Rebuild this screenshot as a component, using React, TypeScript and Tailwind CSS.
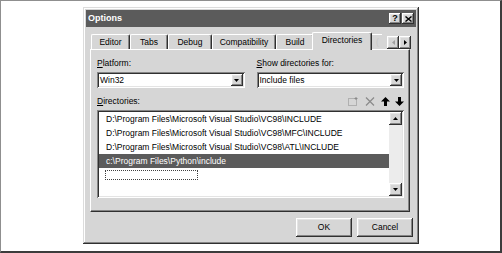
import React from "react";

const raised =
  "shadow-[inset_-1px_-1px_#303030,inset_1px_1px_#ffffff,inset_-2px_-2px_#858585,inset_2px_2px_#e4e4e4]";
const sunken =
  "shadow-[inset_1px_1px_#858585,inset_-1px_-1px_#ffffff,inset_2px_2px_#303030,inset_-2px_-2px_#e4e4e4]";

function Combo({ value }: { value: string }) {
  return (
    <div className={`h-[16px] bg-white ${sunken} flex items-center pl-[3px] pr-[2px]`}>
      <span className="flex-1 text-[8.5px] leading-none text-black">{value}</span>
      <div className={`w-[12px] h-[12px] bg-[#d6d6d6] ${raised} flex items-center justify-center`}>
        <svg width="5" height="3" viewBox="0 0 5 3">
          <path d="M0 0h5L2.5 3z" fill="#000" />
        </svg>
      </div>
    </div>
  );
}

function Tab({ label, w }: { label: string; w: string }) {
  return (
    <div
      className={`${w} h-[15px] shrink-0 border-t border-l border-white border-r border-r-[#303030] rounded-tl-[2px] rounded-tr-[2px] shadow-[inset_-1px_0_#858585] flex items-center justify-center text-[8.5px] leading-none text-black`}
    >
      {label}
    </div>
  );
}

function Row({ text }: { text: string }) {
  return (
    <div className="h-[14px] flex items-center pl-[7px] text-[8.5px] leading-none text-black whitespace-nowrap">
      {text}
    </div>
  );
}

export default function App() {
  return (
    <div className="w-[502px] h-[253px] bg-white border-t border-l border-[#8f8f8f] border-r-2 border-b-2 border-r-[#3c3c3c] border-b-[#3c3c3c] pl-[82px] pt-[6px] font-['Liberation_Sans',Arial,sans-serif]">
      <div
        className={`w-[336px] h-[237px] bg-[#d6d6d6] p-[3px] shadow-[inset_-1px_-1px_#303030,inset_1px_1px_#dcdcdc,inset_-2px_-2px_#858585,inset_2px_2px_#ffffff] flex flex-col`}
      >
        {/* Title bar */}
        <div className="h-[17px] bg-[#5b5b5b] flex items-center justify-between pl-[2px] pr-[2px] shrink-0">
          <span className="text-white font-bold text-[9px] leading-none">Options</span>
          <div className="flex gap-[1px]">
            <div className={`w-[12px] h-[11px] bg-[#d6d6d6] ${raised} flex items-center justify-center text-[9px] font-bold leading-none text-black`}>
              ?
            </div>
            <div className={`w-[12px] h-[11px] bg-[#d6d6d6] ${raised} flex items-center justify-center`}>
              <svg width="7" height="6" viewBox="0 0 7 6">
                <path d="M0.5 0.5L6.5 5.5M6.5 0.5L0.5 5.5" stroke="#000" strokeWidth="1.4" />
              </svg>
            </div>
          </div>
        </div>

        {/* Tabs */}
        <div className="mt-[5px] ml-[4px] mr-[5px] h-[17px] flex items-end relative z-10 shrink-0">
          <div className="w-[1px] shrink-0" />
          <Tab label="Editor" w="w-[39px]" />
          <Tab label="Tabs" w="w-[38px]" />
          <Tab label="Debug" w="w-[44px]" />
          <Tab label="Compatibility" w="w-[64px]" />
          <Tab label="Build" w="w-[38px]" />
          <div className="w-[60px] h-[18px] -mx-[2px] -mb-[1px] shrink-0 bg-[#d6d6d6] border-t border-l border-white border-r border-r-[#303030] rounded-tl-[2px] rounded-tr-[2px] shadow-[inset_-1px_0_#858585] flex items-center justify-center pb-[2px] text-[8.5px] leading-none text-black relative z-20">
            Directories
          </div>
          <div className="w-[12px] h-[15px] shrink-0 border-t border-l border-white overflow-hidden pl-[5px] pt-[3px] text-[8.5px] leading-none text-[#c8c8c8]">
            (
          </div>
          <div className="flex-1" />
          <div className="flex">
            <div className={`w-[12px] h-[13px] bg-[#d6d6d6] ${raised} flex items-center justify-center`}>
              <svg width="3" height="5" viewBox="0 0 3 5">
                <path d="M3 0v5L0 2.5z" fill="#a0a0a0" />
              </svg>
            </div>
            <div className={`w-[12px] h-[13px] bg-[#d6d6d6] ${raised} flex items-center justify-center`}>
              <svg width="3" height="5" viewBox="0 0 3 5">
                <path d="M0 0v5L3 2.5z" fill="#000" />
              </svg>
            </div>
          </div>
        </div>

        {/* Panel */}
        <div className="ml-[4px] w-[320px] h-[163px] shrink-0 border-t border-l border-white border-r border-b border-r-[#303030] border-b-[#303030] shadow-[inset_-1px_-1px_#858585] pl-[6px] pr-[5px] pt-[8px]">
          <div className="grid grid-cols-2 gap-x-[12px]">
            <div className="flex flex-col">
              <div className="h-[11px] text-[8.5px] leading-[11px] text-black">
                <span className="underline">P</span>latform:
              </div>
              <div className="mt-[3px]">
                <Combo value="Win32" />
              </div>
            </div>
            <div className="flex flex-col">
              <div className="h-[11px] text-[8.5px] leading-[11px] text-black">
                <span className="underline">S</span>how directories for:
              </div>
              <div className="mt-[3px]">
                <Combo value="Include files" />
              </div>
            </div>
          </div>

          <div className="mt-[8px] h-[11px] flex items-center">
            <div className="flex-1 text-[8.5px] leading-[11px] text-black">
              <span className="underline">D</span>irectories:
            </div>
            <div className="flex items-center pr-[0px]">
              <svg width="10" height="9" viewBox="0 0 10 9">
                <rect x="0.5" y="1.5" width="8" height="7" fill="none" stroke="#8a8a8a" strokeDasharray="1 1" />
                <path d="M8 0v3M6.5 1.5h3" stroke="#8a8a8a" strokeWidth="1" />
              </svg>
              <svg className="ml-[7px]" width="10" height="9" viewBox="0 0 10 9">
                <path d="M1 0.5L9 8.5M9 0.5L1 8.5" stroke="#8a8a8a" strokeWidth="1.2" />
              </svg>
              <svg className="ml-[6px]" width="9" height="9" viewBox="0 0 9 9">
                <path d="M4.5 0L9 4.5H6V9H3V4.5H0z" fill="#000" />
              </svg>
              <svg className="ml-[5px]" width="9" height="9" viewBox="0 0 9 9">
                <path d="M4.5 9L9 4.5H6V0H3V4.5H0z" fill="#000" />
              </svg>
            </div>
          </div>

          <div className={`mt-[3px] h-[88px] bg-white ${sunken} p-[2px] flex`}>
            <div className="flex-1 flex flex-col overflow-hidden">
              <Row text="D:\Program Files\Microsoft Visual Studio\VC98\INCLUDE" />
              <Row text="D:\Program Files\Microsoft Visual Studio\VC98\MFC\INCLUDE" />
              <Row text="D:\Program Files\Microsoft Visual Studio\VC98\ATL\INCLUDE" />
              <div className="h-[14px] flex items-center pl-[7px] bg-[#5b5b5b] text-[8.5px] leading-none text-white whitespace-nowrap">
                c:\Program Files\Python\include
              </div>
              <div className="h-[14px] flex items-center pl-[6px]">
                <div className="w-[93px] h-[10px] border border-dotted border-[#404040]" />
              </div>
            </div>
            <div className="w-[13px] flex flex-col bg-[#ececec]">
              <div className={`h-[13px] bg-[#d6d6d6] ${raised} flex items-center justify-center`}>
                <svg width="5" height="3" viewBox="0 0 5 3">
                  <path d="M0 3h5L2.5 0z" fill="#000" />
                </svg>
              </div>
              <div className="flex-1" />
              <div className={`h-[13px] bg-[#d6d6d6] ${raised} flex items-center justify-center`}>
                <svg width="5" height="3" viewBox="0 0 5 3">
                  <path d="M0 0h5L2.5 3z" fill="#000" />
                </svg>
              </div>
            </div>
          </div>
        </div>

        {/* Buttons */}
        <div className="mt-[6px] flex justify-end gap-[5px] pr-[3px] shrink-0">
          <div className={`w-[56px] h-[19px] bg-[#d6d6d6] ${raised} flex items-center justify-center text-[8.5px] leading-none text-black`}>
            OK
          </div>
          <div className={`w-[56px] h-[19px] bg-[#d6d6d6] ${raised} flex items-center justify-center text-[8.5px] leading-none text-black`}>
            Cancel
          </div>
        </div>
      </div>
    </div>
  );
}
